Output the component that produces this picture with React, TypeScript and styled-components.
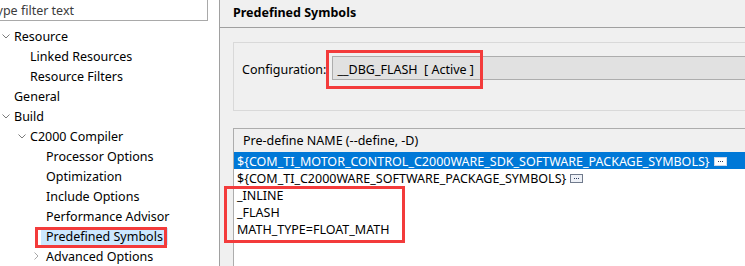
import React from "react";
import styled, { createGlobalStyle } from "styled-components";

const Global = createGlobalStyle`
  html, body { margin: 0; padding: 0; overflow: hidden; }
  body {
    font-family: "Noto Sans", "Liberation Sans", sans-serif;
    font-size: 12.5px;
    color: #000;
    background: #f0f0f0;
  }
`;

const Root = styled.div`
  position: relative;
  display: grid;
  grid-template-columns: 219px 1px 1fr;
  width: 745px;
  height: 266px;
  overflow: hidden;
`;

const LeftPane = styled.div`
  background: #fff;
  display: flex;
  flex-direction: column;
  overflow: hidden;
`;

const Sash = styled.div`
  background: #a0a0a0;
`;

const FilterBox = styled.div`
  margin: -1px 11px 0 -12px;
  height: 20px;
  border: 1px solid #a9a9a9;
  display: flex;
  align-items: center;
  padding-left: 3px;
  color: #3c3c3c;
  flex-shrink: 0;
`;

const Tree = styled.ul`
  list-style: none;
  margin: 5px 0 0;
  padding: 0;
`;

const TreeRow = styled.li<{ $level: number }>`
  height: 20px;
  display: flex;
  align-items: center;
  padding-left: ${(p) => p.$level * 16}px;
  white-space: nowrap;
`;

const Twisty = styled.span`
  width: 14px;
  height: 20px;
  display: flex;
  align-items: center;
  justify-content: flex-start;
  padding-left: 2px;
  box-sizing: border-box;
  flex-shrink: 0;
`;

const TreeLabel = styled.span<{ $selected?: boolean }>`
  padding: 0 5px;
  margin-left: -5px;
  line-height: 17px;
  background: ${(p) => (p.$selected ? "#cce8ff" : "transparent")};
`;

const RightPane = styled.div`
  display: flex;
  flex-direction: column;
  min-width: 0;
`;

const PageTitle = styled.div`
  height: 28px;
  border-bottom: 1px solid #a0a0a0;
  font-weight: bold;
  display: flex;
  align-items: center;
  padding-left: 13px;
  padding-bottom: 3px;
  box-sizing: border-box;
  flex-shrink: 0;
`;

const Body = styled.div`
  padding: 14px 0 0 13px;
  display: flex;
  flex-direction: column;
  gap: 17px;
`;

const ConfigGroup = styled.div`
  height: 69px;
  box-sizing: border-box;
  border: 1px solid #d9d9d9;
  border-right: none;
  display: flex;
  align-items: flex-start;
  padding: 13px 0 0 8px;
  gap: 6px;
`;

const ConfigLabel = styled.span`
  line-height: 27px;
  white-space: nowrap;
`;

const Combo = styled.div`
  flex: 1;
  height: 24px;
  box-sizing: border-box;
  border: 1px solid #adadad;
  border-right: none;
  background: #e1e1e1;
  padding: 2px 0 0 4px;
  display: flex;
  align-items: center;
  white-space: pre;
`;

const Table = styled.div`
  border-top: 1px solid #adadad;
  border-left: 1px solid #adadad;
  background: #fff;
  height: 140px;
`;

const TableHead = styled.div`
  height: 23px;
  background: #f0f0f0;
  display: flex;
  align-items: center;
  padding-left: 9px;
`;

const Row = styled.div<{ $selected?: boolean }>`
  height: 17px;
  display: flex;
  align-items: center;
  padding: 1px 0 0 3px;
  box-sizing: border-box;
  white-space: nowrap;
  background: ${(p) => (p.$selected ? "#0078d7" : "transparent")};
  color: ${(p) => (p.$selected ? "#fff" : "#000")};
`;

const Ellipsis = styled.span<{ $selected?: boolean }>`
  margin-left: 4px;
  width: 13px;
  height: 9px;
  box-sizing: border-box;
  border: 1px solid ${(p) => (p.$selected ? "#d0d8e8" : "#707a8c")};
  background: ${(p) => (p.$selected ? "#fff" : "#eef1f7")};
  display: inline-flex;
  align-items: center;
  justify-content: center;
  gap: 1px;
`;

const Dot = styled.i`
  width: 1px;
  height: 1px;
  background: #2b3a5a;
`;

const Mark = styled.div`
  position: absolute;
  border: 3px solid #f33b3b;
  box-sizing: border-box;
  pointer-events: none;
`;

const ChevronDown = () => (
  <svg width="8" height="5" viewBox="0 0 8 5">
    <path d="M0.5 0.5 L4 4 L7.5 0.5" fill="none" stroke="#7b7b7b" strokeWidth="1" />
  </svg>
);

const ChevronRight = () => (
  <svg width="5" height="8" viewBox="0 0 5 8">
    <path d="M0.5 0.5 L4 4 L0.5 7.5" fill="none" stroke="#a8a8a8" strokeWidth="1" />
  </svg>
);

type Node = { label: string; level: number; twisty?: "open" | "closed"; selected?: boolean };

const nodes: Node[] = [
  { label: "Resource", level: 0, twisty: "open" },
  { label: "Linked Resources", level: 1 },
  { label: "Resource Filters", level: 1 },
  { label: "General", level: 0 },
  { label: "Build", level: 0, twisty: "open" },
  { label: "C2000 Compiler", level: 1, twisty: "open" },
  { label: "Processor Options", level: 2 },
  { label: "Optimization", level: 2 },
  { label: "Include Options", level: 2 },
  { label: "Performance Advisor", level: 2 },
  { label: "Predefined Symbols", level: 2, selected: true },
  { label: "Advanced Options", level: 2, twisty: "closed" },
];

const symbols = [
  { name: "${COM_TI_MOTOR_CONTROL_C2000WARE_SDK_SOFTWARE_PACKAGE_SYMBOLS}", more: true },
  { name: "${COM_TI_C2000WARE_SOFTWARE_PACKAGE_SYMBOLS}", more: true },
  { name: "_INLINE" },
  { name: "_FLASH" },
  { name: "MATH_TYPE=FLOAT_MATH" },
];

export default function App() {
  return (
    <>
      <Global />
      <Root>
        <LeftPane>
          <FilterBox>type filter text</FilterBox>
          <Tree>
            {nodes.map((n) => (
              <TreeRow key={n.label} $level={n.level}>
                <Twisty>
                  {n.twisty === "open" && <ChevronDown />}
                  {n.twisty === "closed" && <ChevronRight />}
                </Twisty>
                <TreeLabel $selected={n.selected}>{n.label}</TreeLabel>
              </TreeRow>
            ))}
          </Tree>
        </LeftPane>
        <Sash />
        <RightPane>
          <PageTitle>Predefined Symbols</PageTitle>
          <Body>
            <ConfigGroup>
              <ConfigLabel>Configuration:</ConfigLabel>
              <Combo>{"__DBG_FLASH  [ Active ]"}</Combo>
            </ConfigGroup>
            <Table>
              <TableHead>Pre-define NAME (--define, -D)</TableHead>
              {symbols.map((s, i) => (
                <Row key={s.name} $selected={i === 0}>
                  {s.name}
                  {s.more && (
                    <Ellipsis $selected={i === 0}>
                      <Dot />
                      <Dot />
                      <Dot />
                    </Ellipsis>
                  )}
                </Row>
              ))}
            </Table>
          </Body>
        </RightPane>
        <Mark style={{ left: 35, top: 227, width: 132, height: 21 }} />
        <Mark style={{ left: 326, top: 50, width: 157, height: 39 }} />
        <Mark style={{ left: 224, top: 186, width: 181, height: 57 }} />
      </Root>
    </>
  );
}
